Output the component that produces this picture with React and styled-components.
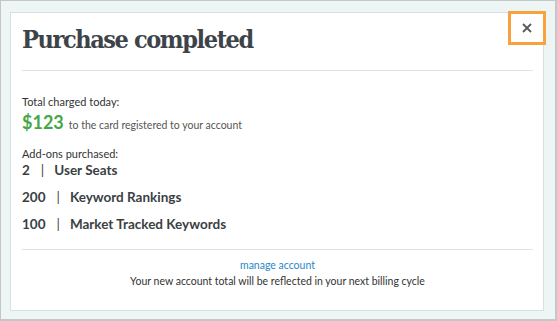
import React from "react";
import styled, { createGlobalStyle } from "styled-components";

const GlobalStyle = createGlobalStyle`
  html, body { margin: 0; padding: 0; }
  body { font-family: Lato, "Open Sans", sans-serif; }
`;

const Page = styled.div`
  box-sizing: border-box;
  width: 557px;
  height: 321px;
  background: #eef5f5;
  border: 1px solid #c3c7c8;
  border-right-width: 2px;
  border-bottom-width: 2px;
  padding: 11px 0 0 9px;
  position: relative;
  overflow: hidden;
`;

const Modal = styled.div`
  box-sizing: border-box;
  width: 534px;
  height: 299px;
  background: #fff;
  border: 1px solid #d6dfe1;
  padding: 0 10px 0 11px;
  color: #3b4045;
`;

const Title = styled.h1`
  margin: 0;
  padding-top: 12px;
  font-family: "DejaVu Serif", serif;
  font-stretch: condensed;
  font-weight: 700;
  font-size: 25px;
  line-height: 30px;
  letter-spacing: -1.4px;
  color: #3d4449;
`;

const Divider = styled.hr`
  border: 0;
  border-top: 1px solid #dfe5e6;
  margin: ${p => p.$top}px 0 0;
`;

const Label = styled.div`
  font-size: 11px;
  line-height: 14px;
  color: #333;
  margin-top: ${p => p.$top}px;
`;

const Charge = styled.div`
  display: flex;
  align-items: baseline;
  gap: 5px;
  margin-top: 2px;
`;

const Amount = styled.span`
  font-size: 18px;
  font-weight: 700;
  color: #45a746;
  line-height: 22px;
`;

const Note = styled.span`
  font-size: 10.5px;
  color: #555;
`;

const Item = styled.div`
  display: flex;
  align-items: center;
  font-size: 13.5px;
  font-weight: 700;
  line-height: 16px;
  color: #3a3f44;
  margin-top: ${p => p.$top}px;
`;

const Bar = styled.span`
  font-weight: 400;
  margin: 0 10px 0 11px;
`;

const Footer = styled.div`
  text-align: center;
  font-size: 10.5px;
  line-height: 16px;
  margin-top: 7px;
  color: #333;
`;

const Link = styled.a`
  color: #2a87c8;
  text-decoration: none;
  display: block;
`;

const Close = styled.button`
  position: absolute;
  top: 10px;
  left: 507px;
  box-sizing: border-box;
  width: 38px;
  height: 34px;
  background: #fff;
  border: 3px solid #f7a23d;
  padding: 0;
  display: flex;
  align-items: center;
  justify-content: center;
`;

const items = [
  { qty: 2, name: "User Seats", top: 1 },
  { qty: 200, name: "Keyword Rankings", top: 11 },
  { qty: 100, name: "Market Tracked Keywords", top: 11 }
];

const App = () =>
  <>
    <GlobalStyle />
    <Page>
      <Modal>
        <Title>Purchase completed</Title>
        <Divider $top={15} />
        <Label $top={24}>Total charged today:</Label>
        <Charge>
          <Amount>$123</Amount>
          <Note>to the card registered to your account</Note>
        </Charge>
        <Label $top={14}>Add-ons purchased:</Label>
        {items.map(i =>
          <Item key={i.name} $top={i.top}>
            {i.qty}
            <Bar>|</Bar>
            {i.name}
          </Item>
        )}
        <Divider $top={17} />
        <Footer>
          <Link href="#">manage account</Link>
          Your new account total will be reflected in your next billing cycle
        </Footer>
      </Modal>
      <Close aria-label="close">
        <svg width="10" height="10" viewBox="0 0 10 10">
          <path d="M1 1L9 9M9 1L1 9" stroke="#555b60" strokeWidth="1.8" />
        </svg>
      </Close>
    </Page>
  </>;

export default App;
